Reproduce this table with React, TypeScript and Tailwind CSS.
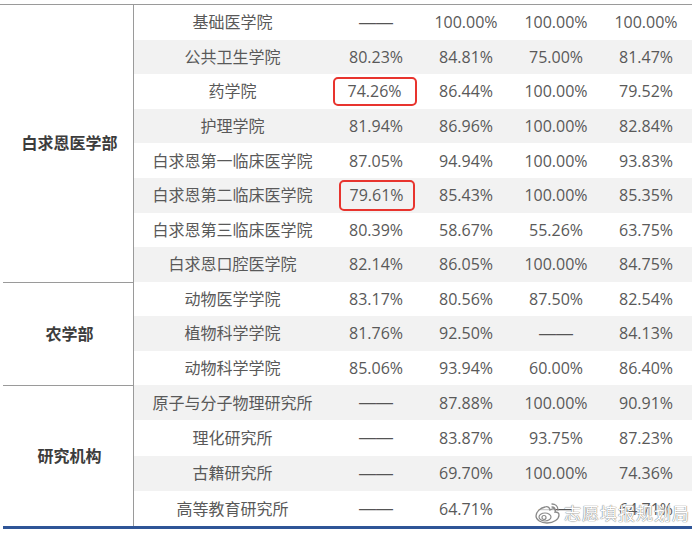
import React from "react";

type Row = { name: string; v: string[]; box?: number };
type Group = { title: string; rowH: string; rows: Row[] };

const groups: Group[] = [
  {
    title: "白求恩医学部",
    rowH: "h-[34.6px]",
    rows: [
      { name: "基础医学院", v: ["——", "100.00%", "100.00%", "100.00%"] },
      { name: "公共卫生学院", v: ["80.23%", "84.81%", "75.00%", "81.47%"] },
      { name: "药学院", v: ["74.26%", "86.44%", "100.00%", "79.52%"], box: 1 },
      { name: "护理学院", v: ["81.94%", "86.96%", "100.00%", "82.84%"] },
      { name: "白求恩第一临床医学院", v: ["87.05%", "94.94%", "100.00%", "93.83%"] },
      { name: "白求恩第二临床医学院", v: ["79.61%", "85.43%", "100.00%", "85.35%"], box: 2 },
      { name: "白求恩第三临床医学院", v: ["80.39%", "58.67%", "55.26%", "63.75%"] },
      { name: "白求恩口腔医学院", v: ["82.14%", "86.05%", "100.00%", "84.75%"] },
    ],
  },
  {
    title: "农学部",
    rowH: "h-[34.4px]",
    rows: [
      { name: "动物医学学院", v: ["83.17%", "80.56%", "87.50%", "82.54%"] },
      { name: "植物科学学院", v: ["81.76%", "92.50%", "——", "84.13%"] },
      { name: "动物科学学院", v: ["85.06%", "93.94%", "60.00%", "86.40%"] },
    ],
  },
  {
    title: "研究机构",
    rowH: "h-[35.4px]",
    rows: [
      { name: "原子与分子物理研究所", v: ["——", "87.88%", "100.00%", "90.91%"] },
      { name: "理化研究所", v: ["——", "83.87%", "93.75%", "87.23%"] },
      { name: "古籍研究所", v: ["——", "69.70%", "100.00%", "74.36%"] },
      { name: "高等教育研究所", v: ["——", "64.71%", "——", "64.71%"] },
    ],
  },
];

function WeiboMark() {
  return (
    <svg width="28" height="24" viewBox="0 0 28 24" fill="none">
      <path
        d="M11 6C6 7 2 11 2 15c0 4 5 7 11 7 7 0 12-4 12-8 0-2-2-3-4-3 1-2 0-4-3-3l-2 1c0-2-2-4-5-3z"
        stroke="#8a8a8a"
        strokeWidth="1.3"
        fill="white"
        fillOpacity="0.7"
      />
      <ellipse cx="11" cy="16" rx="6" ry="4" stroke="#8a8a8a" strokeWidth="1.2" />
      <circle cx="10" cy="16.5" r="2" stroke="#8a8a8a" strokeWidth="1.2" />
      <path d="M18 3c3 0 6 2 6 6" stroke="#8a8a8a" strokeWidth="1.3" strokeLinecap="round" />
      <path d="M18 6c1.5 0 3 1 3 3" stroke="#8a8a8a" strokeWidth="1.3" strokeLinecap="round" />
    </svg>
  );
}

export default function App() {
  let idx = 0;
  return (
    <div
      className="relative w-[700px] h-[534px] bg-white text-[16px] text-[#595959] overflow-hidden"
      style={{ fontFamily: '"Open Sans", "Noto Sans CJK SC", sans-serif' }}
    >
      <div className="w-[692px] pt-[4px]">
        <div className="h-px bg-[#9a9a9a]" />
        {groups.map((g, gi) => (
          <div key={g.title} className="flex">
            <div
              className={`ml-[3px] w-[131px] flex items-center justify-center font-bold text-[#3c3c3c] border-r border-[#9a9a9a] ${
                gi > 0 ? "border-t" : ""
              }`}
            >
              <span className="pl-[3px]">{g.title}</span>
            </div>
            <div className="flex-1 flex flex-col">
              {g.rows.map((r) => {
                const gray = idx++ % 2 === 1;
                return (
                  <div
                    key={r.name}
                    className={`flex items-center ${g.rowH} ${gray ? "bg-[#f2f2f2]" : "bg-white"}`}
                  >
                    <div className="w-[197px] text-center whitespace-nowrap">{r.name}</div>
                    {r.v.map((val, i) => (
                      <div key={i} className="w-[90px] flex justify-center">
                        {i === 0 && r.box === 1 ? (
                          <span className="w-[84px] h-[29px] flex items-center justify-center border-2 border-[#e8342e] rounded-[5px] -ml-[3px]">
                            {val}
                          </span>
                        ) : i === 0 && r.box === 2 ? (
                          <span className="w-[76px] h-[31px] flex items-center justify-center border-2 border-[#e8342e] rounded-[5px] ml-[1px]">
                            {val}
                          </span>
                        ) : val === "——" ? (
                          <span
                            style={{ fontFamily: '"Liberation Sans", sans-serif' }}
                            className="text-[17px] text-[#555]"
                          >
                            ——
                          </span>
                        ) : (
                          <span>{val}</span>
                        )}
                      </div>
                    ))}
                  </div>
                );
              })}
            </div>
          </div>
        ))}
        <div className="ml-[3px] h-[3px] bg-[#2f5597]" />
      </div>

      {/* weibo watermark */}
      <div className="absolute left-[534px] top-[500px] flex items-center gap-[2px]">
        <WeiboMark />
        <span
          className="text-[17px] text-white tracking-[1px]"
          style={{
            fontFamily: '"Noto Sans CJK SC", sans-serif',
            textShadow: "0 0 1px #777, 0 0 1px #777",
          }}
        >
          志愿填报规划局
        </span>
      </div>
    </div>
  );
}
